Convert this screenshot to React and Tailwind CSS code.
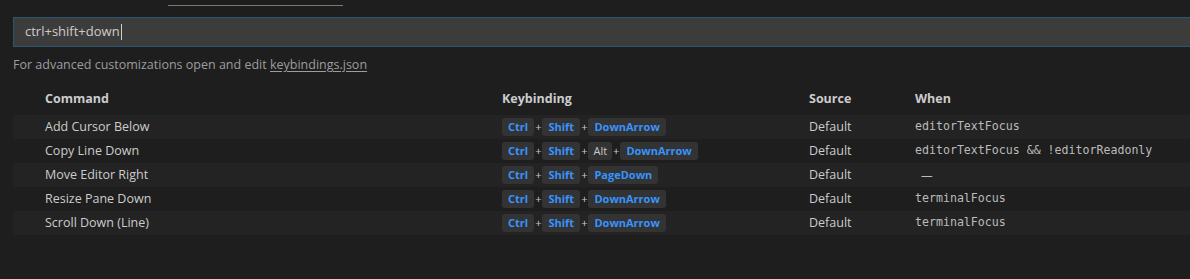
import React from "react";

const rows = [
  { cmd: "Add Cursor Below", keys: ["Ctrl", "Shift", "DownArrow"], when: "editorTextFocus" },
  { cmd: "Copy Line Down", keys: ["Ctrl", "Shift", "Alt", "DownArrow"], when: "editorTextFocus && !editorReadonly" },
  { cmd: "Move Editor Right", keys: ["Ctrl", "Shift", "PageDown"], when: null },
  { cmd: "Resize Pane Down", keys: ["Ctrl", "Shift", "DownArrow"], when: "terminalFocus" },
  { cmd: "Scroll Down (Line)", keys: ["Ctrl", "Shift", "DownArrow"], when: "terminalFocus" },
];

const highlighted = new Set(["Ctrl", "Shift", "DownArrow", "PageDown"]);

function Key({ k }) {
  const hi = highlighted.has(k);
  return (
    <span
      className={
        "inline-flex h-[18px] items-center rounded-[3px] bg-[#333333] text-[11px] " +
        (hi ? "px-[6px] font-bold text-[#3794ff]" : "px-[5px] text-[#c8c8c8]")
      }
    >
      {k}
    </span>
  );
}

function Keys({ keys }) {
  return (
    <div className="flex items-center">
      {keys.map((k, i) => (
        <React.Fragment key={i}>
          {i > 0 && <span className="px-px text-[11px] text-[#cccccc]">+</span>}
          <Key k={k} />
        </React.Fragment>
      ))}
    </div>
  );
}

export default function App() {
  return (
    <div
      className="h-[279px] w-[1190px] overflow-hidden bg-[#1e1e1e] text-[12.5px] text-[#cccccc]"
      style={{ fontFamily: '"Open Sans", "Noto Sans", sans-serif' }}
    >
      <div className="h-[17px] pt-[5px]">
        <div className="ml-[168px] h-px w-[175px] bg-[#7c7c6c]" />
      </div>
      <div className="ml-[13px] flex h-[30px] w-[1190px] items-center border border-[#2a5570] bg-[#3c3c3c] pl-[11px] text-[13px] text-[#cccccc]">
        <span>ctrl+shift+down</span>
        <span className="ml-px h-[16px] w-px bg-[#cccccc]" />
      </div>
      <div className="ml-[13px] mt-[9px] h-[18px] leading-[18px] text-[#9d9d9d]">
        For advanced customizations open and edit{" "}
        <span className="underline underline-offset-2">keybindings.json</span>
      </div>
      <div className="ml-[13px] mt-[13px] flex h-[24px] items-center font-bold text-[#cccccc]">
        <div className="w-[489px] pl-[32px]">Command</div>
        <div className="w-[307px]">Keybinding</div>
        <div className="w-[106px]">Source</div>
        <div>When</div>
      </div>
      <div className="ml-[13px] mt-[4px]">
        {rows.map((r, i) => (
          <div
            key={i}
            className={
              "flex h-[24px] items-center " + (i % 2 === 0 ? "bg-[#232323]" : "")
            }
          >
            <div className="w-[489px] pl-[32px]">{r.cmd}</div>
            <div className="w-[307px]">
              <Keys keys={r.keys} />
            </div>
            <div className="w-[106px]">Default</div>
            <div
              className="text-[11.6px] text-[#bbbbbb]"
              style={{ fontFamily: '"DejaVu Sans Mono", monospace' }}
            >
              {r.when ?? <span className="pl-[6px]" style={{ fontFamily: '"Open Sans", sans-serif' }}>—</span>}
            </div>
          </div>
        ))}
      </div>
    </div>
  );
}
